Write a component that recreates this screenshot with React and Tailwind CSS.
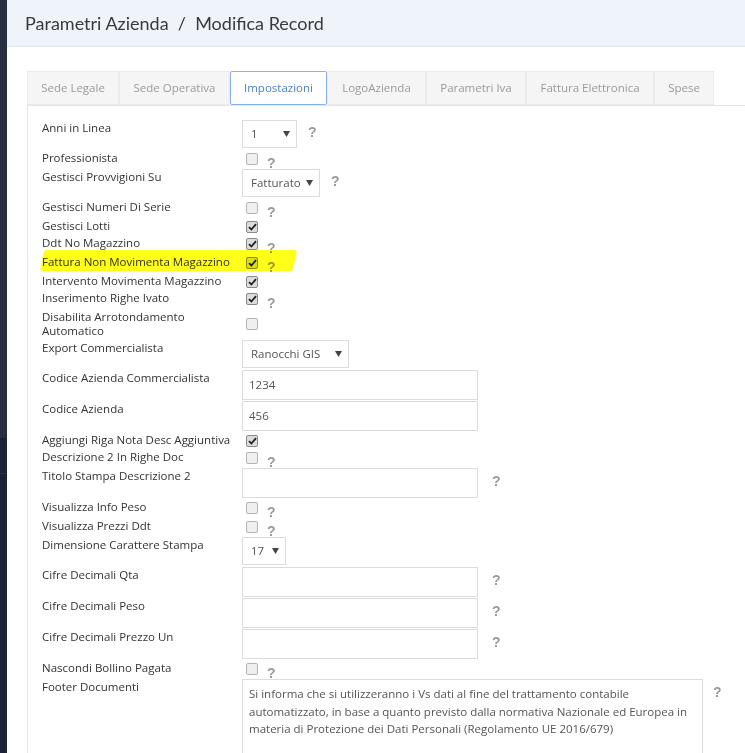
import React from 'react';

const tabs = [
  { name: 'Sede Legale', w: 'w-[92px]' },
  { name: 'Sede Operativa', w: 'w-[111px]' },
  { name: 'Impostazioni', w: 'w-[97px]', active: true },
  { name: 'LogoAzienda', w: 'w-[99px]' },
  { name: 'Parametri Iva', w: 'w-[100px]' },
  { name: 'Fattura Elettronica', w: 'w-[128px]' },
  { name: 'Spese', w: 'w-[60px]' },
];

const Help = ({ className = '' }) => (
  <span className={`font-['Liberation_Sans',sans-serif] font-bold text-[14px] leading-none text-[#9a9a9a] ${className}`}>?</span>
);

const Check = ({ checked, className = 'mt-[3px]' }) => (
  <span
    className={`ml-[4px] w-[12px] h-[12px] rounded-[2px] border flex items-center justify-center ${className} ${
      checked ? 'border-[#8a8a8a] bg-[#dcdcdc]' : 'border-[#b4b4b4] bg-[#efefef]'
    }`}
  >
    {checked && (
      <svg width="9" height="8" viewBox="0 0 9 8">
        <path d="M1 4.2 L3.4 6.5 L8 1.2" fill="none" stroke="#222" strokeWidth="1.8" />
      </svg>
    )}
  </span>
);

const Select = ({ value, w }) => (
  <div className={`${w} h-[28px] border border-[#dcdcdc] bg-white flex items-center justify-between pl-[8px] pr-[6px] text-[11.5px] text-[#555]`}>
    <span>{value}</span>
    <svg width="7" height="6" viewBox="0 0 7 6">
      <path d="M0 0 H7 L3.5 6 Z" fill="#444" />
    </svg>
  </div>
);

const Input = ({ value }) => (
  <div className="w-[236px] h-[30px] border border-[#dcdcdc] bg-white flex items-center pl-[6px] text-[11.5px] text-[#555]">
    {value}
  </div>
);

// row with a checkbox, optional help mark
const CheckRow = ({ label, checked, help, children }) => (
  <div className={`relative flex ${help ? 'h-[19px]' : 'h-[17px]'}`}>
    {children}
    <div className="w-[200px] text-[11.5px] leading-[15px]">{label}</div>
    <Check checked={checked} />
    {help && <Help className="ml-[9px] mt-[6px]" />}
  </div>
);

const SelectRow = ({ label, value, w, help }) => (
  <div className="flex h-[30px]">
    <div className="w-[200px] text-[11.5px] leading-[15px]">{label}</div>
    <Select value={value} w={w} />
    {help && <Help className="ml-[11px] mt-[5px]" />}
  </div>
);

const InputRow = ({ label, value, help }) => (
  <div className="flex h-[31px]">
    <div className="w-[200px] text-[11.5px] leading-[15px]">{label}</div>
    <Input value={value} />
    {help && <Help className="ml-[14px] mt-[6px]" />}
  </div>
);

export default function App() {
  return (
    <div className="h-[753px] overflow-hidden flex bg-white font-['Open_Sans',sans-serif] text-[#333]">
      {/* sidebar edge */}
      <aside className="w-[7px] flex flex-col shrink-0">
        <div className="h-[438px] bg-[#27303f]" />
        <div className="h-[36px] bg-[#1b2231] border-b border-[#2a3242]" />
        <div className="flex-1 bg-[#1b2231]" />
      </aside>

      <main className="flex-1 min-w-0">
        <header className="h-[47px] bg-[#eff4fb] border-b border-[#dfe6ef] pl-[18px] flex items-center">
          <h1 className="font-['Lato',sans-serif] text-[18px] text-[#3a3a3a]">
            Parametri Azienda &nbsp;/&nbsp; Modifica Record
          </h1>
        </header>

        <div className="pl-[20px] pt-[24px]">
          {/* tabs */}
          <div className="flex border-b border-[#e6e6e6]">
            {tabs.map((t) => (
              <div
                key={t.name}
                className={`${t.w} h-[34px] flex items-center justify-center text-[11.5px] border ${
                  t.active
                    ? 'bg-white border-[#88aff3] text-[#4a7fd6] rounded-[2px]'
                    : 'bg-[#f5f5f5] border-[#ebebeb] text-[#9a9a9a]'
                }`}
              >
                {t.name}
              </div>
            ))}
          </div>

          {/* tab content */}
          <div className="border-l border-[#e6e6e6] pl-[14px] pt-[14px] pb-[40px]">
            <SelectRow label="Anni in Linea" value="1" w="w-[55px]" help />
            <CheckRow label="Professionista" help />
            <SelectRow label="Gestisci Provvigioni Su" value="Fatturato" w="w-[78px]" help />
            <CheckRow label="Gestisci Numeri Di Serie" help />
            <CheckRow label="Gestisci Lotti" checked />
            <CheckRow label="Ddt No Magazzino" checked help />
            <CheckRow label="Fattura Non Movimenta Magazzino" checked help>
              <div className="absolute left-0 top-[-4px] w-[253px] h-[21px] bg-[#ffff1a] mix-blend-multiply rounded-[3px] -skew-x-12 pointer-events-none" />
            </CheckRow>
            <CheckRow label="Intervento Movimenta Magazzino" checked />
            <CheckRow label="Inserimento Righe Ivato" checked help />
            <div className="flex h-[31px]">
              <div className="w-[200px] text-[11.5px] leading-[14px] pt-px">
                Disabilita Arrotondamento
                <br />
                Automatico
              </div>
              <Check className="mt-[9px]" />
            </div>
            <SelectRow label="Export Commercialista" value="Ranocchi GIS" w="w-[107px]" />
            <InputRow label="Codice Azienda Commercialista" value="1234" />
            <InputRow label="Codice Azienda" value="456" />
            <CheckRow label="Aggiungi Riga Nota Desc Aggiuntiva" checked />
            <CheckRow label="Descrizione 2 In Righe Doc" help />
            <InputRow label="Titolo Stampa Descrizione 2" value="" help />
            <CheckRow label="Visualizza Info Peso" help />
            <CheckRow label="Visualizza Prezzi Ddt" help />
            <SelectRow label="Dimensione Carattere Stampa" value="17" w="w-[44px]" />
            <InputRow label="Cifre Decimali Qta" value="" help />
            <InputRow label="Cifre Decimali Peso" value="" help />
            <InputRow label="Cifre Decimali Prezzo Un" value="" help />
            <CheckRow label="Nascondi Bollino Pagata" help />
            <div className="flex">
              <div className="w-[200px] text-[11.5px] leading-[15px]">Footer Documenti</div>
              <div className="w-[461px] h-[100px] border border-[#dcdcdc] px-[6px] pt-[5px] text-[11.5px] leading-[17.5px] text-[#555] whitespace-nowrap overflow-hidden">
                Si informa che si utilizzeranno i Vs dati al fine del trattamento contabile
                <br />
                automatizzato, in base a quanto previsto dalla normativa Nazionale ed Europea in
                <br />
                materia di Protezione dei Dati Personali (Regolamento UE 2016/679)
              </div>
              <Help className="ml-[10px] mt-[6px]" />
            </div>
          </div>
        </div>
      </main>
    </div>
  );
}
